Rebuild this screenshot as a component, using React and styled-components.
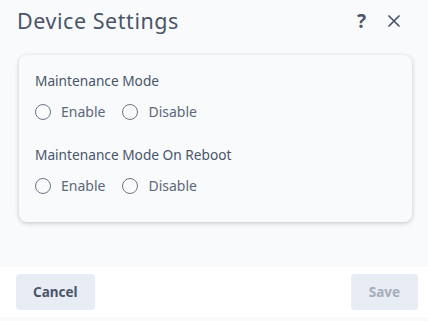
import React from "react";
import styled, { createGlobalStyle } from "styled-components";

const Global = createGlobalStyle`
  html, body { margin: 0; padding: 0; background: #f8fafc; }
  body { font-family: "Noto Sans", "Open Sans", sans-serif; color: #4a5568; }
`;

const Dialog = styled.div`
  width: 428px;
  height: 321px;
  display: flex;
  flex-direction: column;
  background: #f8fafc;
`;

const Header = styled.div`
  display: flex;
  align-items: center;
  justify-content: space-between;
  padding: 3px 28px 0 17px;
  height: 35px;
`;

const Title = styled.h1`
  margin: 0;
  font-size: 21.5px;
  letter-spacing: 0.55px;
  font-weight: 400;
  line-height: 30px;
  color: #4a5568;
`;

const Actions = styled.div`
  display: flex;
  align-items: center;
  gap: 22px;
`;

const IconButton = styled.button`
  border: 0;
  background: none;
  padding: 0;
  color: #4a5568;
  font-family: "Noto Sans", sans-serif;
  font-size: 19px;
  font-weight: 700;
  line-height: 20px;
  display: flex;
  align-items: center;
`;

const Body = styled.div`
  flex: 1;
  padding: 17px 16px 0 19px;
`;

const Card = styled.div`
  background: #f8fafc;
  border-radius: 8px;
  box-shadow: 0 1px 4px rgba(0, 0, 0, 0.16), 0 2px 6px rgba(0, 0, 0, 0.06);
  padding: 17px 16px 28px 16px;
  display: flex;
  flex-direction: column;
  gap: 26px;
`;

const Group = styled.div`
  display: flex;
  flex-direction: column;
  gap: 13px;
`;

const Label = styled.div`
  font-size: 13.7px;
  line-height: 18px;
  color: #4a5568;
`;

const RadioRow = styled.div`
  display: flex;
  align-items: center;
  gap: 17px;
`;

const RadioOption = styled.label`
  display: flex;
  align-items: center;
  gap: 10px;
  font-size: 14px;
  line-height: 17px;
  color: #5c6879;
`;

const Circle = styled.span`
  width: 14px;
  height: 14px;
  border: 1.6px solid #6b7685;
  border-radius: 50%;
  display: inline-block;
  box-sizing: content-box;
`;

const Footer = styled.div`
  background: #ffffff;
  height: 50px;
  margin-bottom: 4px;
  display: flex;
  align-items: center;
  justify-content: space-between;
  padding: 0 10px 0 16px;
`;

const Button = styled.button`
  height: 36px;
  border: 0;
  border-radius: 4px;
  background: #e8ecf4;
  font-family: "Noto Sans", sans-serif;
  font-size: 13.5px;
  font-weight: 700;
  padding: 0 ${(p) => p.$px}px;
  color: ${(p) => (p.disabled ? "#a3acb9" : "#4a5568")};
`;

function Radio({ label }) {
  return (
    <RadioOption>
      <Circle />
      {label}
    </RadioOption>
  );
}

function Setting({ title }) {
  return (
    <Group>
      <Label>{title}</Label>
      <RadioRow>
        <Radio label="Enable" />
        <Radio label="Disable" />
      </RadioRow>
    </Group>
  );
}

export default function App() {
  return (
    <>
      <Global />
      <Dialog>
        <Header>
          <Title>Device Settings</Title>
          <Actions>
            <IconButton aria-label="help">?</IconButton>
            <IconButton aria-label="close">
              <svg width="12" height="12" viewBox="0 0 12 12">
                <path d="M1 1 L11 11 M11 1 L1 11" stroke="#4a5568" strokeWidth="1.7" strokeLinecap="round" />
              </svg>
            </IconButton>
          </Actions>
        </Header>
        <Body>
          <Card>
            <Setting title="Maintenance Mode" />
            <Setting title="Maintenance Mode On Reboot" />
          </Card>
        </Body>
        <Footer>
          <Button $px={17}>Cancel</Button>
          <Button $px={18} disabled>Save</Button>
        </Footer>
      </Dialog>
    </>
  );
}
